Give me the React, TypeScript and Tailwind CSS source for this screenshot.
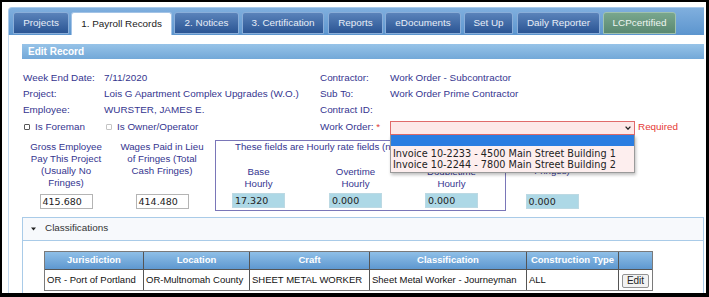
import React from "react"

const tabs = [
  { label: "Projects", cls: "ml-[4px] w-[56px]", kind: "blue" },
  { label: "1. Payroll Records", cls: "ml-[2px] w-[101px]", kind: "active" },
  { label: "2. Notices", cls: "ml-[2px] w-[65px]", kind: "blue" },
  { label: "3. Certification", cls: "ml-[3px] w-[82px]", kind: "blue" },
  { label: "Reports", cls: "ml-[4px] w-[55px]", kind: "blue" },
  { label: "eDocuments", cls: "ml-[2px] w-[76px]", kind: "blue" },
  { label: "Set Up", cls: "ml-[3px] w-[49px]", kind: "blue" },
  { label: "Daily Reporter", cls: "ml-[4px] w-[83px]", kind: "blue" },
  { label: "LCPcertified", cls: "ml-[3px] w-[73px]", kind: "green" },
]

const kindCls: Record<string, string> = {
  blue: "h-[22px] bg-linear-to-b from-[#5a83ba] to-[#2b5594] border border-[#8aaed9] text-[#e8eef8]",
  active: "h-[23px] bg-white border border-b-0 border-[#a3c3e6] text-[#222]",
  green: "h-[22px] bg-linear-to-b from-[#79a78e] to-[#5a8971] border border-[#a0c2ae] text-[#eef5f0]",
}

const navy = "text-[#35358f]"
const mono = "font-['DejaVu_Sans',Verdana,sans-serif]"

const columns = [
  { label: "Jurisdiction", w: "w-[99px]" },
  { label: "Location", w: "w-[106px]" },
  { label: "Craft", w: "w-[120px]" },
  { label: "Classification", w: "w-[157px]" },
  { label: "Construction Type", w: "w-[92px]" },
]

const row = ["OR - Port of Portland", "OR-Multnomah County", "SHEET METAL WORKER", "Sheet Metal Worker - Journeyman", "ALL"]

function ValueBox({ value, blue }: { value: string; blue?: boolean }) {
  return (
    <div
      className={`w-[53px] h-[15px] border ${blue ? "bg-[#add8e6] border-[#bcd9e3]" : "bg-white border-[#b4b4b4]"} ${mono} text-[9.5px] leading-[13px] pl-[2px] text-[#222]`}
    >
      {value}
    </div>
  )
}

function Checkbox({ disabled }: { disabled?: boolean }) {
  return (
    <span
      className={`inline-block w-[6px] h-[6px] rounded-[1px] border ${disabled ? "border-[#c4c4c4]" : "border-[#5a5a5a]"} bg-white`}
    />
  )
}

export default function App() {
  return (
    <div className="w-[709px] h-[297px] bg-black overflow-hidden">
      <div className="relative ml-[2px] mt-[2px] w-[704px] h-[291px] bg-white overflow-hidden font-['Liberation_Sans',Arial,sans-serif] text-[9.7px]">
        <div className="ml-[6px] mt-[5px] w-[696px]">
          {/* tab bar */}
          <div className="h-[28px] flex items-start pt-[4px] rounded-tl-[4px] border-t border-l border-[#a9c9ea] bg-linear-to-b from-[#80afde] to-[#5c95ce] text-[9.9px]">
            {tabs.map((t) => (
              <div
                key={t.label}
                className={`${t.cls} ${kindCls[t.kind]} rounded-t-[3px] flex items-center justify-center whitespace-nowrap leading-none`}
              >
                {t.label}
              </div>
            ))}
          </div>

          {/* body */}
          <div className="border-l border-[#c5daf0] pl-[13px] pt-[9px] h-[260px]">
            <div className="h-[15px] bg-linear-to-b from-[#97c3e8] to-[#72a8d8] pl-[6px] text-white font-bold leading-[15px] text-[10px]">
              Edit Record
            </div>

            <div className={`mt-[11px] grid grid-cols-[82px_216px_70px_1fr] auto-rows-[16.33px] items-center ${navy} whitespace-nowrap text-[9.9px]`}>
              <div className="pl-[1px]">Week End Date:</div>
              <div>7/11/2020</div>
              <div>Contractor:</div>
              <div>Work Order - Subcontractor</div>

              <div className="pl-[1px]">Project:</div>
              <div>Lois G Apartment Complex Upgrades (W.O.)</div>
              <div>Sub To:</div>
              <div>Work Order Prime Contractor</div>

              <div className="pl-[1px]">Employee:</div>
              <div>WURSTER, JAMES E.</div>
              <div>Contract ID:</div>
              <div></div>

              <div className="flex items-center">
                <span className="ml-[2px] flex items-center"><Checkbox /></span>
                <span className="ml-[5px]">Is Foreman</span>
              </div>
              <div className="flex items-center">
                <span className="ml-[2px] flex items-center"><Checkbox disabled /></span>
                <span className="ml-[5px]">Is Owner/Operator</span>
              </div>
              <div>
                Work Order: <span className="text-[#e03b3b]">*</span>
              </div>
              <div className="flex items-center self-end">
                <div className="w-[245px] h-[14px] border border-[#e06a6a] bg-[#fde8e8] flex items-center justify-end pr-[3px]">
                  <svg width="6" height="4" viewBox="0 0 6 4">
                    <path d="M0.6 0.6 L3 3.2 L5.4 0.6" fill="none" stroke="#222" strokeWidth="1.3" />
                  </svg>
                </div>
                <span className="ml-[3px] text-[#e53935]">Required</span>
              </div>
            </div>

            {/* amounts */}
            <div className={`mt-[4.5px] flex items-start ${navy}`}>
              <div className="ml-[4px] w-[80px] flex flex-col items-center">
                <div className="pt-[1px] h-[54px] leading-[12px] text-center">
                  Gross Employee<br />Pay This Project<br />(Usually No<br />Fringes)
                </div>
                <ValueBox value="415.680" />
              </div>
              <div className="ml-[12px] w-[88px] flex flex-col items-center">
                <div className="pt-[1px] h-[54px] leading-[12px] text-center">
                  Wages Paid in Lieu<br />of Fringes (Total<br />Cash Fringes)
                </div>
                <ValueBox value="414.480" />
              </div>
              <div className="ml-[9px] w-[291px] h-[71px] border-[1.5px] border-[#7a76b8]">
                <div className="pl-[19px] leading-[12px] whitespace-nowrap">
                  These fields are Hourly rate fields (not totals)
                </div>
                <div className="mt-[13px] flex">
                  <div className="w-[85px] flex flex-col items-center">
                    <div className="leading-[12px] text-center">Base<br />Hourly</div>
                    <div className="mt-[3.5px]"><ValueBox value="17.320" blue /></div>
                  </div>
                  <div className="w-[109px] flex flex-col items-center">
                    <div className="leading-[12px] text-center">Overtime<br />Hourly</div>
                    <div className="mt-[3.5px]"><ValueBox value="0.000" blue /></div>
                  </div>
                  <div className="w-[83px] flex flex-col items-center">
                    <div className="leading-[12px] text-center">Doubletime<br />Hourly</div>
                    <div className="mt-[3.5px]"><ValueBox value="0.000" blue /></div>
                  </div>
                </div>
              </div>
              <div className="ml-[6px] w-[80px] flex flex-col items-center">
                <div className="pt-[1px] h-[54px] leading-[12px] text-center">
                  Fringe Benefits<br />(Paid to Plan /<br />Fringes)
                </div>
                <ValueBox value="0.000" blue />
              </div>
            </div>

            {/* classifications */}
            <div className="mt-[6px] border border-[#a9cbe8] h-[80px]">
              <div className="h-[23px] bg-[#f7f9fc] border-b border-[#a9cbe8] flex items-center text-[#333] text-[9.9px]">
                <svg className="ml-[8px]" width="5" height="4" viewBox="0 0 5 4">
                  <path d="M0 0.5 L5 0.5 L2.5 3.5 Z" fill="#222" />
                </svg>
                <span className="ml-[9px]">Classifications</span>
              </div>

              <div className="ml-[21px] mt-[10px] w-[609px] border border-[#7a7a7a] text-[9.5px]">
                <div className="flex h-[18px] bg-linear-to-b from-[#8fbfe7] to-[#5e98d0] border-b border-[#555] text-white font-bold">
                  {columns.map((c) => (
                    <div key={c.label} className={`${c.w} border-r border-[#555] flex items-center justify-center whitespace-nowrap`}>
                      {c.label}
                    </div>
                  ))}
                  <div className="flex-1" />
                </div>
                <div className="flex h-[20px] text-[#111]">
                  {columns.map((c, i) => (
                    <div key={c.label} className={`${c.w} border-r border-[#555] flex items-center pl-[2px] whitespace-nowrap overflow-hidden`}>
                      {row[i]}
                    </div>
                  ))}
                  <div className="flex-1 flex justify-center">
                    <div className="mt-[4px] w-[27px] h-[14px] border border-[#939393] bg-[#f2f2f2] rounded-[2px] text-[10px] leading-[12px] text-center text-[#222]">
                      Edit
                    </div>
                  </div>
                </div>
              </div>
            </div>
          </div>
        </div>

        {/* open work order dropdown */}
        <div className={`absolute left-[388px] top-[133px] w-[245px] border-x border-b border-[#9a9a9a] bg-[#fdeeee] shadow-[1px_2px_3px_rgba(0,0,0,0.25)] pb-[1px] ${mono} text-[9.7px] text-[#222]`}>
          <div className="h-[11px] bg-[#2a7de1]" />
          <div className="pt-[2px] pl-[2px] leading-[11.3px] whitespace-nowrap">
            <div>Invoice 10-2233 - 4500 Main Street Building 1</div>
            <div>Invoice 10-2244 - 7800 Main Street Building 2</div>
          </div>
        </div>
      </div>
    </div>
  )
}
